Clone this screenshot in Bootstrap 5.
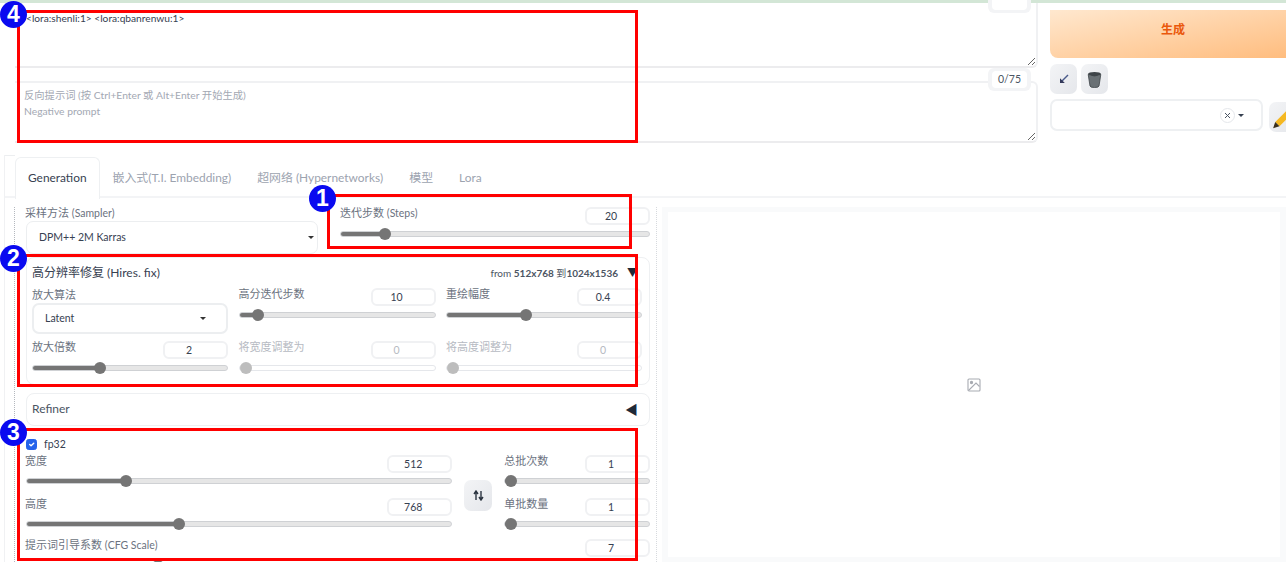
<!doctype html>
<html lang="zh">
  <head>
    <meta charset="UTF-8">
    <meta name="viewport" content="width=device-width, initial-scale=1.0">
    <title>Stable Diffusion WebUI</title>
    <link href="https://cdn.jsdelivr.net/npm/bootstrap@5.3.0/dist/css/bootstrap.min.css" rel="stylesheet">
    <style>
      html, body {
        height: 562px;
        overflow: hidden;
      }
      body {
        position: relative;
        background: #fff;
        color: #374151;
        font-family: Lato, "Noto Sans CJK SC", sans-serif;
        font-size: 11px;
      }
      .top-strip {
        height: 3px;
        background: #d3e6d6;
      }
      .top-area {
        height: 152px;
      }
      .prompt-col {
        position: relative;
        width: 1023px;
        margin-left: 15px;
        flex: none;
      }
      .prompt-box {
        display: block;
        height: 65px;
        padding: 9px 11px;
        border: 0;
        border-right: 2px solid #f0f1f3;
        border-bottom: 2px solid #ececee;
        border-radius: 0 0 6px 0;
        font-family: Lato, "Noto Sans CJK SC", sans-serif;
        font-size: 10.2px;
        line-height: 13px;
        color: #374151;
      }
      .prompt-box.neg {
        height: 62px;
        margin-top: 13px;
        padding: 4px 9px;
        border-top: 2px solid #f0f1f3;
        border-radius: 0 6px 6px 0;
        font-size: 10.3px;
        line-height: 16px;
      }
      .prompt-box.neg::placeholder {
        color: #a3a8b3;
      }
      .count-chip {
        position: absolute;
        right: 7px;
        width: 43px;
        padding: 3px 4px;
        background: #f3f4f6;
        border-radius: 6px;
      }
      .count-chip span {
        display: block;
        height: 17px;
        background: #fff;
        border-radius: 4px;
        text-align: center;
        font-size: 10.5px;
        line-height: 17px;
        color: #4b5563;
      }
      .chip-a { top: -13px; }
      .chip-b { top: 65px; }
      .side-col {
        width: 246px;
        margin: 7px 0 0 12px;
        flex: none;
      }
      .gen-btn {
        display: block;
        width: 100%;
        height: 48px;
        padding: 0 0 8px;
        border: 0;
        border-radius: 0 0 8px 8px;
        background: linear-gradient(to bottom right, #ffe8cf, #ffbc7d);
        color: #ea580c;
        font-size: 12px;
        font-weight: 700;
      }
      .tool-row {
        margin-top: 6px;
      }
      .pick-row {
        margin-top: 5px;
      }
      .tool-btn {
        display: flex;
        align-items: center;
        justify-content: center;
        width: 27px;
        height: 30px;
        padding: 0;
        border: 0;
        border-radius: 7px;
        background: linear-gradient(to bottom right, #f3f4f6, #e5e7eb);
        flex: none;
      }
      .pencil-btn {
        justify-content: flex-start;
        margin: 3px 0 0 6px;
        padding-left: 2px;
      }
      .style-pick {
        width: 213px;
        height: 32px;
        padding-right: 17px;
        background: #fff;
        border: 2px solid #eef0f2;
        border-radius: 7px;
        flex: none;
      }
      .clear-dot {
        display: flex;
        align-items: center;
        justify-content: center;
        width: 15px;
        height: 15px;
        border: 1px solid #e5e7eb;
        border-radius: 50%;
        flex: none;
      }
      .caret-mini {
        width: 0;
        height: 0;
        margin-left: 3px;
        border-left: 3px solid transparent;
        border-right: 3px solid transparent;
        border-top: 3px solid #374151;
      }
      .gen-panel {
        margin-left: 4px;
        border-left: 1px solid #f0f1f3;
      }
      .gen-tabs {
        height: 43px;
        padding-top: 2px;
        border-bottom: 2px solid #f3f4f6;
      }
      .tab-stub {
        width: 10px;
        height: 10px;
        margin-top: -2px;
        border-top: 1px solid #eceef0;
      }
      .gen-tabs .nav-link {
        height: 41px;
        margin: 0;
        padding: 0 13px;
        border: 0;
        color: #9ca3af;
        font-size: 11.9px;
        line-height: 41px;
      }
      .gen-tabs .nav-link.active {
        height: 42px;
        border: 1px solid #eef0f2;
        border-bottom: 0;
        border-radius: 6px 6px 0 0;
        padding: 0 12px;
        color: #374151;
        line-height: 40px;
      }
      .gen-body {
        height: 364px;
        padding-top: 9px;
      }
      .left-col {
        width: 636px;
        margin-left: 9px;
        padding-left: 10px;
        border-left: 1px dotted #b4b8be;
        flex: none;
      }
      .row-top {
        height: 50px;
      }
      .sampler-col {
        width: 292px;
        margin-left: 1px;
      }
      .steps-col {
        width: 310px;
      }
      .field-label {
        font-size: 11px;
        line-height: 12px;
        color: #6b7280;
        white-space: nowrap;
      }
      .field-label small {
        font-size: 10.5px;
      }
      .sampler-label {
        margin: 0 0 2px -1px;
        padding-top: 0;
      }
      .pick-select {
        height: 33px;
        padding: 0 24px 0 12px;
        border: 1px solid #eceef0;
        border-radius: 7px;
        background-image: url("data:image/svg+xml,%3csvg xmlns='http://www.w3.org/2000/svg' viewBox='0 0 8 4'%3e%3cpath fill='%23333' d='M0 0h8L4 4z'/%3e%3c/svg%3e");
        background-size: 6px 3px;
        background-position: right 3px center;
        font-family: Lato, "Noto Sans CJK SC", sans-serif;
        font-size: 10.5px;
        color: #374151;
      }
      .hires-select {
        height: 31px;
        padding-left: 11px;
        background-position: right 20px center;
        border-width: 2px;
      }
      .num-box {
        width: 65px;
        height: 18px;
        padding: 0 13px 0 0;
        border: 2px solid #f0f1f3;
        border-radius: 6px;
        text-align: center;
        font-family: Lato, "Noto Sans CJK SC", sans-serif;
        font-size: 10.5px;
        color: #374151;
        flex: none;
      }
      .num-box:disabled {
        background: #fff;
        color: #b6bac2;
      }
      .sd-range {
        display: block;
        width: 100%;
        height: 12px;
        margin-top: 3px;
        padding: 0;
        background: transparent;
        -webkit-appearance: none;
        appearance: none;
      }
      .sd-range::-webkit-slider-runnable-track {
        height: 6px;
        border: 1px solid #cfd1d4;
        border-radius: 3px;
        background: linear-gradient(to right, #757575 var(--fill, 0), #e6e6e6 var(--fill, 0));
      }
      .sd-range::-webkit-slider-thumb {
        -webkit-appearance: none;
        width: 12px;
        height: 12px;
        margin-top: -4px;
        border: 0;
        border-radius: 50%;
        background: #757575;
      }
      .sd-range:disabled::-webkit-slider-runnable-track {
        background: #fff;
        border-color: #e5e7eb;
      }
      .sd-range:disabled::-webkit-slider-thumb {
        background: #bdbdbd;
      }
      .is-off .field-label {
        color: #b6bac2;
      }
      .fold-card {
        margin-left: 1px;
        border: 1px solid #eef0f2;
        border-radius: 8px;
      }
      .hires-card {
        height: 128px;
        padding: 6px 7px 0 5px;
      }
      .hires-head {
        height: 24px;
        font-size: 12px;
        line-height: 18px;
        color: #374151;
        white-space: nowrap;
      }
      .hires-head small {
        font-size: 12px;
      }
      .hires-size {
        font-size: 10px;
        color: #4b5563;
      }
      .hires-size b {
        font-weight: 700;
      }
      .fold-mark {
        margin-left: 9px;
        margin-right: 4px;
        font-size: 11px;
        color: #1f2937;
      }
      .fold-mark.is-left {
        font-size: 13px;
      }
      .hires-grid {
        display: grid;
        grid-template-columns: 196px 197px 196px;
        column-gap: 10.5px;
        row-gap: 7px;
      }
      .hires-grid .pick-wrap {
        height: 46px;
      }
      .hires-grid .pick-label {
        margin-bottom: 2px;
        padding-top: 1px;
      }
      .refiner-card {
        height: 33px;
        margin-top: 8px;
        padding: 0 7px 0 5px;
        line-height: 30px;
        font-size: 12px;
        color: #4b5563;
      }
      .fp-row {
        height: 11px;
        margin: 13px 0 5px 1px;
        line-height: 11px;
        font-size: 10.5px;
      }
      .fp-row .form-check-input {
        width: 11px;
        height: 11px;
        margin: 0 7px 0 0;
        background-color: #2563eb;
        border-color: #2563eb;
      }
      .size-main {
        width: 427px;
        margin-left: 1px;
      }
      .size-main .field-label {
        margin-left: -1px;
      }
      .size-gap {
        margin-bottom: 11px;
      }
      .size-gap .sd-range {
        margin-top: 2px;
      }
      .swap-btn {
        width: 28px;
        height: 31px;
        margin: 25px 12px 0;
      }
      .size-side {
        width: 146px;
      }
      .cfg-row {
        margin-top: -2px;
      }
      .divide-line {
        width: 0;
        margin: 0 5px 0 6px;
        border-left: 1px dotted #d7dade;
      }
      .preview-box {
        width: 624px;
        height: 355px;
        padding: 5px 6px;
        background: #f9fafb;
        flex: none;
      }
      .preview-inner {
        height: 345px;
        background: #fff;
      }
      .mark-box {
        position: absolute;
        border: 3px solid #f00;
        pointer-events: none;
      }
      .mark-num {
        position: absolute;
        width: 27px;
        height: 27px;
        border-radius: 50%;
        background: #0a0af0;
        color: #fff;
        font-family: "Liberation Sans", sans-serif;
        font-size: 23px;
        font-weight: 700;
        line-height: 27px;
        text-align: center;
      }
      .mb-4th { left: 17px; top: 10px; width: 621px; height: 133px; }
      .mb-1st { left: 327px; top: 194px; width: 305px; height: 55px; }
      .mb-2nd { left: 17px; top: 254px; width: 621px; height: 133px; }
      .mb-3rd { left: 17px; top: 428px; width: 621px; height: 133px; }
      .mn-4th { left: 0; top: 1px; }
      .mn-1st { left: 309px; top: 185px; }
      .mn-2nd { left: 0; top: 245px; }
      .mn-3rd { left: 0; top: 419px; }
    </style>
  </head>
  <body>

    <div class="top-strip"></div>

    <!-- prompts and generate -->
    <div class="top-area d-flex">
      <div class="prompt-col">
        <textarea class="form-control prompt-box">&lt;lora:shenli:1&gt; &lt;lora:qbanrenwu:1&gt;</textarea>
        <textarea class="form-control prompt-box neg" placeholder="反向提示词 (按 Ctrl+Enter 或 Alt+Enter 开始生成)&#10;Negative prompt"></textarea>
        <div class="count-chip chip-a"><span></span></div>
        <div class="count-chip chip-b"><span>0/75</span></div>
      </div>
      <div class="side-col">
        <button class="btn gen-btn">生成</button>
        <div class="tool-row d-flex gap-1">
          <button class="btn tool-btn">
            <svg width="12" height="12" viewBox="0 0 12 12"><path d="M10 2 3.500 8.500" stroke="#4a5a8a" stroke-width="1.400" fill="none"/><path d="M2 10V5.200L6.800 10z" fill="#33395a"/></svg>
          </button>
          <button class="btn tool-btn">
            <svg width="15" height="17" viewBox="0 0 15 17"><ellipse cx="7.500" cy="3" rx="6.500" ry="2" fill="#3f4549"/><path d="M1.200 3.500 3 15q.3 1.500 4.500 1.500T12 15l1.800-11.500Q7.500 6.500 1.200 3.500z" fill="#6a7175" stroke="#3f4549" stroke-width=".8"/></svg>
          </button>
        </div>
        <div class="pick-row d-flex align-items-start">
          <div class="style-pick d-flex align-items-center justify-content-end">
            <span class="clear-dot">
              <svg width="7" height="7" viewBox="0 0 7 7"><path d="M1 1l5 5M6 1 1 6" stroke="#4b5563" stroke-width="1"/></svg>
            </span>
            <span class="caret-mini"></span>
          </div>
          <button class="btn tool-btn pencil-btn">
            <svg width="24" height="24" viewBox="0 0 17 17"><path d="M13 2 16 5 6 15 3 12z" fill="#f5b821"/><path d="M3 12 6 15 1.500 16.500z" fill="#3a2f1c"/><path d="M13 2 16 5 14.500 6.500 11.500 3.500z" fill="#d9793a"/></svg>
          </button>
        </div>
      </div>
    </div>

    <div class="gen-panel">
      <ul class="nav nav-tabs gen-tabs">
        <li class="tab-stub"></li>
        <li class="nav-item"><a class="nav-link active" href="#">Generation</a></li>
        <li class="nav-item"><a class="nav-link" href="#">嵌入式(T.I. Embedding)</a></li>
        <li class="nav-item"><a class="nav-link" href="#">超网络 (Hypernetworks)</a></li>
        <li class="nav-item"><a class="nav-link" href="#">模型</a></li>
        <li class="nav-item"><a class="nav-link" href="#">Lora</a></li>
      </ul>

      <div class="gen-body d-flex">
        <div class="left-col">

          <div class="row-top d-flex justify-content-between">
            <div class="sampler-col">
              <div class="field-label sampler-label">采样方法 <small>(Sampler)</small></div>
              <select class="form-select pick-select"><option>DPM++ 2M Karras</option></select>
            </div>
            <div class="steps-col">
              <div class="d-flex justify-content-between">
                <span class="field-label">迭代步数 <small>(Steps)</small></span>
                <input class="form-control num-box" type="text" value="20">
              </div>
              <input class="sd-range" type="range" min="1" max="150" value="20">
            </div>
          </div>

          <div class="fold-card hires-card">
            <div class="hires-head d-flex justify-content-between">
              <span>高分辨率修复 <small>(Hires. fix)</small></span>
              <span class="hires-size">from <b>512x768</b> 到<b>1024x1536</b><span class="fold-mark">▼</span></span>
            </div>
            <div class="hires-grid">
              <div class="pick-wrap">
                <div class="field-label pick-label">放大算法</div>
                <select class="form-select pick-select hires-select"><option>Latent</option></select>
              </div>
              <div>
                <div class="d-flex justify-content-between">
                  <span class="field-label">高分迭代步数</span>
                  <input class="form-control num-box" type="text" value="10">
                </div>
                <input class="sd-range" type="range" min="0" max="150" value="10">
              </div>
              <div>
                <div class="d-flex justify-content-between">
                  <span class="field-label">重绘幅度</span>
                  <input class="form-control num-box" type="text" value="0.4">
                </div>
                <input class="sd-range" type="range" min="0" max="1" step="0.01" value="0.4">
              </div>
              <div>
                <div class="d-flex justify-content-between">
                  <span class="field-label">放大倍数</span>
                  <input class="form-control num-box" type="text" value="2">
                </div>
                <input class="sd-range" type="range" min="1" max="4" step="0.05" value="2">
              </div>
              <div class="is-off">
                <div class="d-flex justify-content-between">
                  <span class="field-label">将宽度调整为</span>
                  <input class="form-control num-box" type="text" value="0" disabled>
                </div>
                <input class="sd-range" type="range" min="0" max="2048" value="0" disabled>
              </div>
              <div class="is-off">
                <div class="d-flex justify-content-between">
                  <span class="field-label">将高度调整为</span>
                  <input class="form-control num-box" type="text" value="0" disabled>
                </div>
                <input class="sd-range" type="range" min="0" max="2048" value="0" disabled>
              </div>
            </div>
          </div>

          <div class="fold-card refiner-card d-flex justify-content-between">
            <span>Refiner</span><span class="fold-mark is-left">◀</span>
          </div>

          <div class="fp-row d-flex align-items-center">
            <input class="form-check-input" type="checkbox" checked>
            <span>fp32</span>
          </div>

          <div class="d-flex">
            <div class="size-main">
              <div class="size-gap">
                <div class="d-flex justify-content-between">
                  <span class="field-label">宽度</span>
                  <input class="form-control num-box" type="text" value="512">
                </div>
                <input class="sd-range" type="range" min="64" max="2048" step="8" value="512">
              </div>
              <div class="size-gap">
                <div class="d-flex justify-content-between">
                  <span class="field-label">高度</span>
                  <input class="form-control num-box" type="text" value="768">
                </div>
                <input class="sd-range" type="range" min="64" max="2048" step="8" value="768">
              </div>
            </div>
            <button class="btn tool-btn swap-btn">
              <svg width="11" height="11" viewBox="0 0 11 11"><path d="M3 10V2M1 4l2-3 2 3M8 1v8M6 7l2 3 2-3" stroke="#2b3440" stroke-width="1.400" fill="none"/></svg>
            </button>
            <div class="size-side">
              <div class="size-gap">
                <div class="d-flex justify-content-between">
                  <span class="field-label">总批次数</span>
                  <input class="form-control num-box" type="text" value="1">
                </div>
                <input class="sd-range" type="range" min="1" max="100" value="1">
              </div>
              <div class="size-gap">
                <div class="d-flex justify-content-between">
                  <span class="field-label">单批数量</span>
                  <input class="form-control num-box" type="text" value="1">
                </div>
                <input class="sd-range" type="range" min="1" max="8" value="1">
              </div>
            </div>
          </div>

          <div class="cfg-row">
            <div class="d-flex justify-content-between">
              <span class="field-label">提示词引导系数 <small>(CFG Scale)</small></span>
              <input class="form-control num-box" type="text" value="7">
            </div>
            <input class="sd-range" type="range" min="1" max="30" step="0.5" value="7">
          </div>
        </div>

        <div class="divide-line"></div>

        <div class="preview-box">
          <div class="preview-inner d-flex align-items-center justify-content-center">
            <svg width="14" height="14" viewBox="0 0 14 14" fill="none" stroke="#a8abb2" stroke-width="1.100">
              <rect x="1" y="1" width="12" height="12" rx="1"/>
              <circle cx="4.500" cy="4.500" r="1.100" fill="#a8abb2"/>
              <path d="M1.500 12.500 9 5l3.500 3.500"/>
            </svg>
          </div>
        </div>
      </div>
    </div>

    <!-- red markers drawn over the page -->
    <div class="mark-box mb-4th"></div>
    <div class="mark-box mb-1st"></div>
    <div class="mark-box mb-2nd"></div>
    <div class="mark-box mb-3rd"></div>
    <div class="mark-num mn-4th">4</div>
    <div class="mark-num mn-1st">1</div>
    <div class="mark-num mn-2nd">2</div>
    <div class="mark-num mn-3rd">3</div>

    <script>
      // fill the slider track up to the thumb
      document.querySelectorAll('.sd-range').forEach(r => {
        const ratio = (r.value - r.min) / (r.max - r.min);
        const px = ratio * (r.offsetWidth - 12) + 6;
        r.style.setProperty('--fill', px + 'px');
      });
    </script>
    <script src="https://cdn.jsdelivr.net/npm/bootstrap@5.3.0/dist/js/bootstrap.bundle.min.js"></script>
  </body>
</html>
